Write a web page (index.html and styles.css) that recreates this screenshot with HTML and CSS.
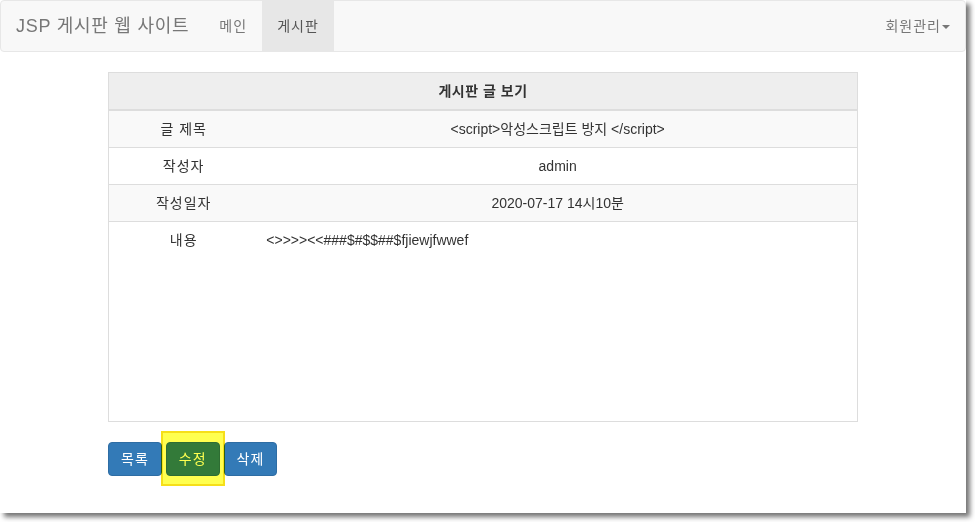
FILE: index.html
```html
<!DOCTYPE html>
<html lang="ko">
<head>
    <meta charset="UTF-8">
    <meta name="viewport" content="width=device-width, initial-scale=1.0">
    <title>JSP 게시판 웹 사이트</title>
    <link rel="stylesheet" href="styles.css">
</head>
<body>
    <div class="window">
        <nav class="navbar">
            <div class="navbar-left">
                <a class="navbar-brand" href="#">JSP 게시판 웹 사이트</a>
                <ul class="nav">
                    <li><a href="#">메인</a></li>
                    <li class="active"><a href="#">게시판</a></li>
                </ul>
            </div>
            <ul class="nav">
                <li><a href="#">회원관리<span class="caret"></span></a></li>
            </ul>
        </nav>

        <div class="container">
            <table class="table">
                <thead>
                    <tr>
                        <th colspan="2">게시판 글 보기</th>
                    </tr>
                </thead>
                <tbody>
                    <tr>
                        <td class="label">글 제목</td>
                        <td>&lt;script&gt;악성스크립트 방지 &lt;/script&gt;</td>
                    </tr>
                    <tr>
                        <td class="label">작성자</td>
                        <td>admin</td>
                    </tr>
                    <tr>
                        <td class="label">작성일자</td>
                        <td>2020-07-17 14시10분</td>
                    </tr>
                    <tr>
                        <td class="label">내용</td>
                        <td class="content">&lt;&gt;&gt;&gt;&gt;&lt;&lt;###$#$$##$fjiewjfwwef</td>
                    </tr>
                </tbody>
            </table>

            <div class="actions">
                <a href="#" class="btn">목록</a>
                <span class="highlight-wrap">
                    <a href="#" class="btn">수정</a>
                    <span class="highlight"></span>
                </span>
                <a href="#" class="btn">삭제</a>
            </div>
        </div>
    </div>
</body>
</html>
```

FILE: styles.css
```css
* {
    box-sizing: border-box;
}
html, body {
    height: 100%;
}
body {
    margin: 0;
    background: #fff;
    font-family: "Liberation Sans", Arial, "Noto Sans CJK KR", sans-serif;
    font-size: 14px;
    line-height: 20px;
    color: #333;
}
a {
    text-decoration: none;
}
.window {
    width: 966px;
    height: 513px;
    background: #fff;
    overflow: hidden;
    box-shadow: 4px 4px 5px rgba(0, 0, 0, 0.55);
}

/* navbar */
.navbar {
    display: flex;
    justify-content: space-between;
    height: 52px;
    background: #f8f8f8;
    border: 1px solid #e7e7e7;
    border-radius: 4px;
    margin-bottom: 20px;
}
.navbar-left {
    display: flex;
}
.navbar-brand {
    padding: 15px 15px;
    font-size: 18px;
    line-height: 20px;
    height: 50px;
    color: #777;
    letter-spacing: 0.75px;
}
.nav {
    display: flex;
    list-style: none;
    margin: 0;
    padding: 0;
}
.nav a {
    display: block;
    padding: 15px 15px;
    color: #777;
    letter-spacing: 1px;
}
.nav .active a {
    background: #e7e7e7;
    color: #555;
}
.caret {
    display: inline-block;
    width: 0;
    height: 0;
    margin-left: 1px;
    vertical-align: middle;
    border-top: 4px solid #777;
    border-right: 4px solid transparent;
    border-left: 4px solid transparent;
}

/* board */
.container {
    width: 780px;
    margin: 0 auto;
    padding: 0 15px;
}
.table {
    width: 100%;
    border-collapse: collapse;
    border: 1px solid #ddd;
    text-align: center;
    margin-bottom: 20px;
}
.table th {
    padding: 8px;
    background: #eee;
    border-bottom: 2px solid #ddd;
    font-weight: bold;
    letter-spacing: 0.5px;
}
.table td {
    padding: 8px;
    border-top: 1px solid #ddd;
    vertical-align: top;
}
.table tbody tr:nth-of-type(odd) {
    background: #f9f9f9;
}
.table .label {
    width: 20%;
    letter-spacing: 1px;
}
.table .content {
    height: 200px;
    text-align: left;
}

/* buttons */
.actions {
    display: flex;
    gap: 4px;
}
.btn {
    display: inline-block;
    padding: 6px 12px;
    font-size: 14px;
    line-height: 20px;
    color: #fff;
    background: #337ab7;
    border: 1px solid #2e6da4;
    border-radius: 4px;
    letter-spacing: 1px;
}
.highlight-wrap {
    position: relative;
    display: inline-block;
}
.highlight {
    position: absolute;
    left: -5px;
    top: -11px;
    right: -5px;
    bottom: -10px;
    background: #ffff3c;
    border: 2px solid #f5dc00;
    mix-blend-mode: multiply;
    opacity: 0.9;
}
```
